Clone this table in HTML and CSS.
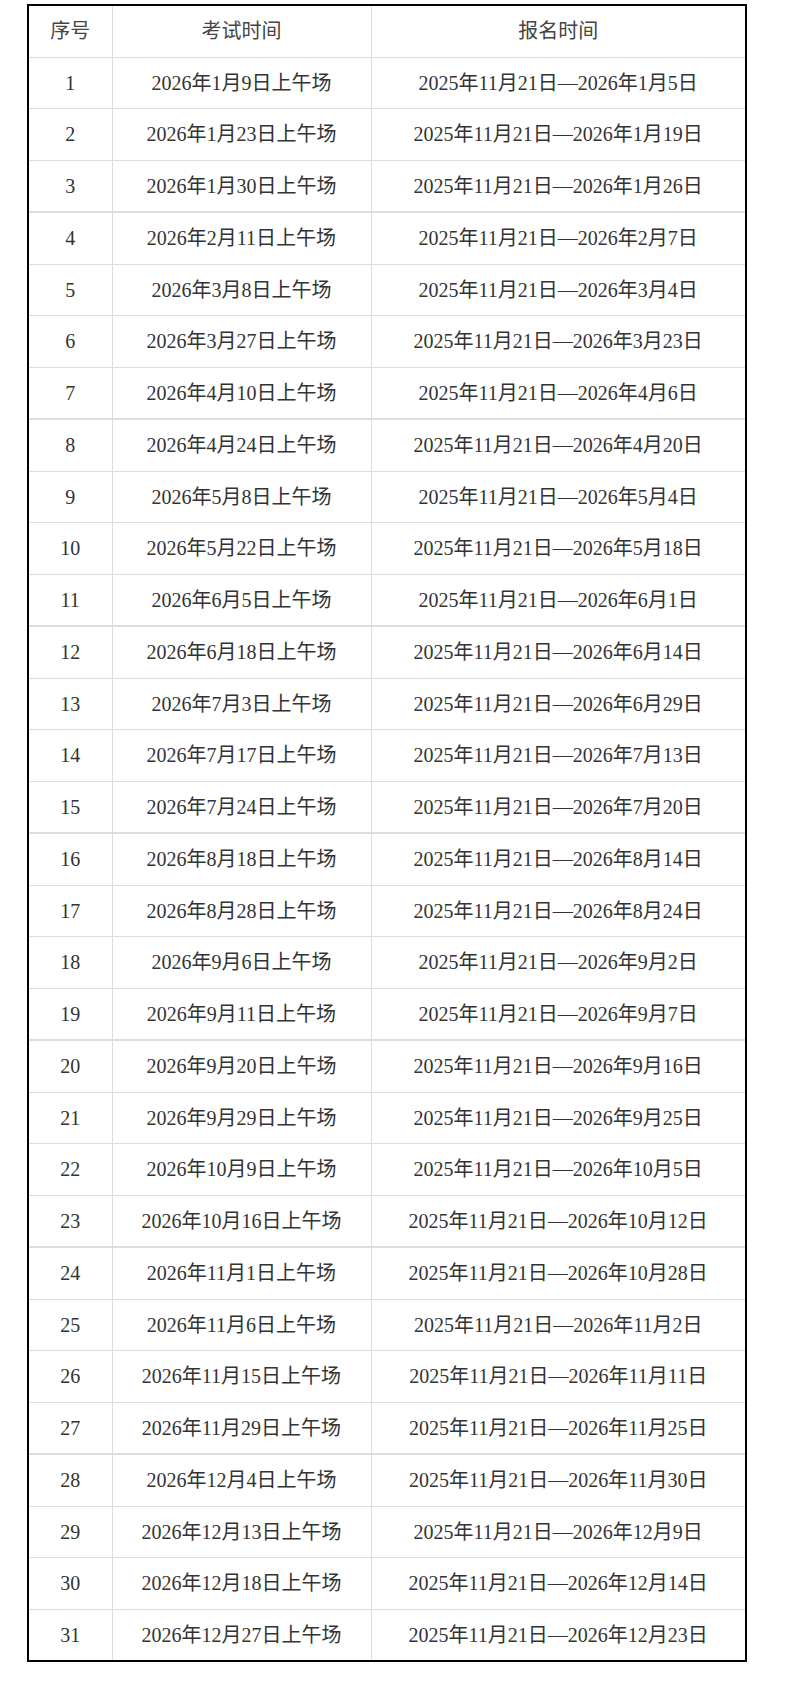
FILE: index.html
```html
<!DOCTYPE html>
<html lang="zh-CN">
<head>
<meta charset="utf-8">
<title>考试时间</title>
<link rel="stylesheet" href="styles.css">
</head>
<body>
<div class="frame">
<table class="exam">
<colgroup><col class="c1"><col class="c2"><col class="c3"></colgroup>
<thead>
<tr><th>序号</th><th>考试时间</th><th>报名时间</th></tr>
</thead>
<tbody>
<tr><td>1</td><td>2026年1月9日上午场</td><td>2025年11月21日—2026年1月5日</td></tr>
<tr><td>2</td><td>2026年1月23日上午场</td><td>2025年11月21日—2026年1月19日</td></tr>
<tr><td>3</td><td>2026年1月30日上午场</td><td>2025年11月21日—2026年1月26日</td></tr>
<tr class="sep"><td>4</td><td>2026年2月11日上午场</td><td>2025年11月21日—2026年2月7日</td></tr>
<tr><td>5</td><td>2026年3月8日上午场</td><td>2025年11月21日—2026年3月4日</td></tr>
<tr><td>6</td><td>2026年3月27日上午场</td><td>2025年11月21日—2026年3月23日</td></tr>
<tr><td>7</td><td>2026年4月10日上午场</td><td>2025年11月21日—2026年4月6日</td></tr>
<tr class="sep"><td>8</td><td>2026年4月24日上午场</td><td>2025年11月21日—2026年4月20日</td></tr>
<tr><td>9</td><td>2026年5月8日上午场</td><td>2025年11月21日—2026年5月4日</td></tr>
<tr><td>10</td><td>2026年5月22日上午场</td><td>2025年11月21日—2026年5月18日</td></tr>
<tr><td>11</td><td>2026年6月5日上午场</td><td>2025年11月21日—2026年6月1日</td></tr>
<tr class="sep"><td>12</td><td>2026年6月18日上午场</td><td>2025年11月21日—2026年6月14日</td></tr>
<tr><td>13</td><td>2026年7月3日上午场</td><td>2025年11月21日—2026年6月29日</td></tr>
<tr><td>14</td><td>2026年7月17日上午场</td><td>2025年11月21日—2026年7月13日</td></tr>
<tr><td>15</td><td>2026年7月24日上午场</td><td>2025年11月21日—2026年7月20日</td></tr>
<tr class="sep"><td>16</td><td>2026年8月18日上午场</td><td>2025年11月21日—2026年8月14日</td></tr>
<tr><td>17</td><td>2026年8月28日上午场</td><td>2025年11月21日—2026年8月24日</td></tr>
<tr><td>18</td><td>2026年9月6日上午场</td><td>2025年11月21日—2026年9月2日</td></tr>
<tr><td>19</td><td>2026年9月11日上午场</td><td>2025年11月21日—2026年9月7日</td></tr>
<tr class="sep"><td>20</td><td>2026年9月20日上午场</td><td>2025年11月21日—2026年9月16日</td></tr>
<tr><td>21</td><td>2026年9月29日上午场</td><td>2025年11月21日—2026年9月25日</td></tr>
<tr><td>22</td><td>2026年10月9日上午场</td><td>2025年11月21日—2026年10月5日</td></tr>
<tr><td>23</td><td>2026年10月16日上午场</td><td>2025年11月21日—2026年10月12日</td></tr>
<tr class="sep"><td>24</td><td>2026年11月1日上午场</td><td>2025年11月21日—2026年10月28日</td></tr>
<tr><td>25</td><td>2026年11月6日上午场</td><td>2025年11月21日—2026年11月2日</td></tr>
<tr><td>26</td><td>2026年11月15日上午场</td><td>2025年11月21日—2026年11月11日</td></tr>
<tr><td>27</td><td>2026年11月29日上午场</td><td>2025年11月21日—2026年11月25日</td></tr>
<tr class="sep"><td>28</td><td>2026年12月4日上午场</td><td>2025年11月21日—2026年11月30日</td></tr>
<tr><td>29</td><td>2026年12月13日上午场</td><td>2025年11月21日—2026年12月9日</td></tr>
<tr><td>30</td><td>2026年12月18日上午场</td><td>2025年11月21日—2026年12月14日</td></tr>
<tr><td>31</td><td>2026年12月27日上午场</td><td>2025年11月21日—2026年12月23日</td></tr>
</tbody>
</table>
</div>
</body>
</html>
```
FILE: styles.css
```css
html, body {
  margin: 0;
  padding: 0;
  background: #fff;
}
body {
  padding: 4px 0 0 27px;
}
.frame {
  display: inline-block;
  box-sizing: border-box;
  width: 720px;
  border: 2px solid #000;
}
.exam {
  border-collapse: collapse;
  table-layout: fixed;
  width: 716px;
  border-style: hidden;
  font-family: "Liberation Serif", "Noto Sans CJK SC", serif;
  font-size: 20px;
  color: #333;
}
.c1 { width: 83px; }
.c2 { width: 259px; }
.c3 { width: 374px; }
.exam th,
.exam td {
  border: 1px solid #ddd;
  padding: 10px 0;
  line-height: 30.5px;
  text-align: center;
  font-weight: normal;
  white-space: nowrap;
}
.exam th {
  color: #444;
}
.exam tr.sep td {
  border-top: 2px solid #ddd;
}
```
